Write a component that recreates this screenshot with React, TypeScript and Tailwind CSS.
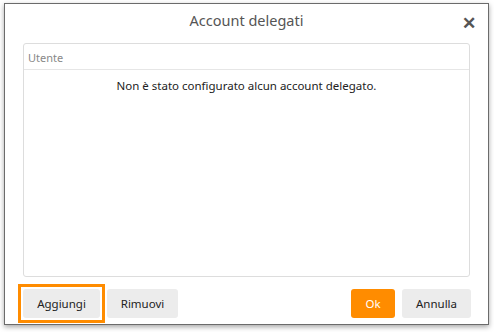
import React from 'react';

export default function App() {
  return (
    <div className="w-[494px] h-[332px] bg-white pl-[4px] pt-[3px] pb-[7px] font-['Noto_Sans',sans-serif]">
      <div className="flex h-full w-[485px] flex-col border border-[#6b6b6b] bg-white shadow-[0_2px_5px_rgba(0,0,0,0.35)]">
        {/* Titolo */}
        <div className="relative flex h-[33px] items-center justify-center">
          <span className="text-[14.5px] text-[#555]">Account delegati</span>
          <span className="absolute right-[12px] top-[6px] text-[17px] font-bold text-[#555]">✕</span>
        </div>

        {/* Tabella */}
        <div className="mx-[18px] mt-[6px] flex flex-1 flex-col rounded-[3px] border border-[#ddd]">
          <div className="h-[26px] border-b border-[#e6e6e6] px-[4px] pt-[8px] text-[11px] leading-none text-[#888]">Utente</div>
          <div className="pt-[8px] text-center text-[11.5px] leading-[16px] text-[#222]">
            Non è stato configurato alcun account delegato.
          </div>
        </div>

        {/* Pulsanti */}
        <div className="flex items-center pl-[18px] pr-[17px] pb-[6px] pt-[12px]">
          <button type="button" className="relative h-[29px] w-[77px] rounded-[3px] bg-[#ececec] text-[11.5px] text-[#222]">
            Aggiungi
            <span className="absolute -inset-[5px] border-[3px] border-[#ff8c00]" />
          </button>
          <button type="button" className="ml-[7px] h-[29px] w-[71px] rounded-[3px] bg-[#ececec] text-[11.5px] text-[#222]">
            Rimuovi
          </button>
          <div className="flex-1" />
          <button type="button" className="h-[29px] w-[44px] rounded-[3px] bg-[#ff8c00] text-[11.5px] text-white">
            Ok
          </button>
          <button type="button" className="ml-[7px] h-[29px] w-[69px] rounded-[3px] bg-[#ececec] text-[11.5px] text-[#222]">
            Annulla
          </button>
        </div>
      </div>
    </div>
  );
}
